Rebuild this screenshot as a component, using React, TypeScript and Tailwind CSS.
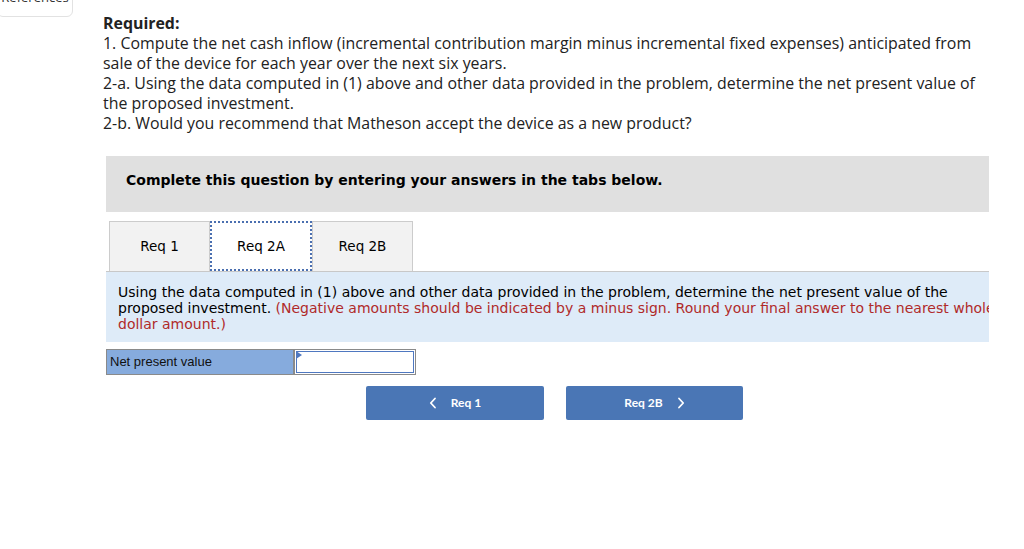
import React from "react";

function Chevron({ dir }: { dir: "left" | "right" }) {
  return (
    <svg width="8" height="12" viewBox="0 0 8 12" fill="none">
      {dir === "left" ? (
        <path d="M6 1.5 L1.8 6 L6 10.5" stroke="white" strokeWidth="1.8" strokeLinecap="round" strokeLinejoin="round" />
      ) : (
        <path d="M2 1.5 L6.2 6 L2 10.5" stroke="white" strokeWidth="1.8" strokeLinecap="round" strokeLinejoin="round" />
      )}
    </svg>
  );
}

export default function App() {
  const req = { fontFamily: "'Open Sans', Lato, sans-serif" };
  const lato = { fontFamily: "Lato, 'Open Sans', sans-serif" };
  const verd = { fontFamily: "'DejaVu Sans', Verdana, sans-serif" };
  return (
    <div className="relative w-[1024px] h-[549px] overflow-hidden bg-white">
      <div
        className="absolute left-[-3px] top-[-14px] w-[76px] h-[31px] rounded-md border border-[#e2e2e2] bg-white text-[13px] text-[#333] flex items-start justify-center pt-[1px]"
        style={req}
      >
        References
      </div>

      <div className="pt-[13px] pl-[103px] text-[15.9px] leading-[20px] text-[#222]" style={req}>
        <div className="font-bold">Required:</div>
        <div>
          1. Compute the net cash inflow (incremental contribution margin minus incremental fixed expenses) anticipated from
          <br />
          sale of the device for each year over the next six years.
        </div>
        <div>
          2-a. Using the data computed in (1) above and other data provided in the problem, determine the net present value of
          <br />
          the proposed investment.
        </div>
        <div>2-b. Would you recommend that Matheson accept the device as a new product?</div>
      </div>

      <div className="ml-[106px] mt-[23px] w-[883px]">
        <div className="h-[56px] bg-[#e0e0e0] flex items-start pt-[14px] pl-[20px]">
          <span className="font-bold text-[14px] leading-[20px] text-black" style={verd}>
            Complete this question by entering your answers in the tabs below.
          </span>
        </div>

        <div className="mt-[9px] flex pl-[3px] border-b border-[#c8c8c8] text-[13.5px] text-black" style={verd}>
          <div className="w-[101px] h-[50px] bg-[#f2f2f2] border border-b-0 border-[#cccccc] flex items-center justify-center">
            Req 1
          </div>
          <div className="w-[102px] h-[50px] bg-white border-2 border-dotted border-[#4a6fb0] flex items-center justify-center">
            Req 2A
          </div>
          <div className="w-[101px] h-[50px] bg-[#f2f2f2] border border-b-0 border-[#cccccc] flex items-center justify-center">
            Req 2B
          </div>
        </div>

        <div className="h-[70px] bg-[#deebf8] overflow-hidden pt-[12px] pl-[12px] text-[14px] leading-[16px] text-black whitespace-nowrap" style={verd}>
          <div>Using the data computed in (1) above and other data provided in the problem, determine the net present value of the</div>
          <div>
            proposed investment.{" "}
            <span className="text-[#b02a2a]">
              (Negative amounts should be indicated by a minus sign. Round your final answer to the nearest whole
            </span>
          </div>
          <div className="text-[#b02a2a]">dollar amount.)</div>
        </div>

        <div className="mt-[7px] flex h-[26px] w-[310px]" style={{ fontFamily: "'Liberation Sans', Arial, sans-serif" }}>
          <div className="w-[189px] h-full bg-[#86abdd] border border-[#8a8a8a] flex items-center pl-[3px] text-[13px] text-[#111]">
            Net present value
          </div>
          <div className="relative w-[122px] h-full bg-white border border-[#8a8a8a] p-[1px]">
            <div className="w-full h-full border border-[#4f78c0]" />
            <div className="absolute left-[1px] top-[1px] w-0 h-0 border-t-[4px] border-b-[4px] border-l-[6px] border-t-transparent border-b-transparent border-l-[#4f78c0]" />
          </div>
        </div>

        <div className="mt-[11px] flex gap-[22px] pl-[260px]" style={lato}>
          <div className="w-[178px] h-[34px] bg-[#4a76b5] rounded-[2px] flex items-center justify-center gap-[14px] text-white text-[12px] font-bold">
            <Chevron dir="left" />
            <span>Req 1</span>
          </div>
          <div className="w-[177px] h-[34px] bg-[#4a76b5] rounded-[2px] flex items-center justify-center gap-[14px] text-white text-[12px] font-bold">
            <span>Req 2B</span>
            <Chevron dir="right" />
          </div>
        </div>
      </div>
    </div>
  );
}
